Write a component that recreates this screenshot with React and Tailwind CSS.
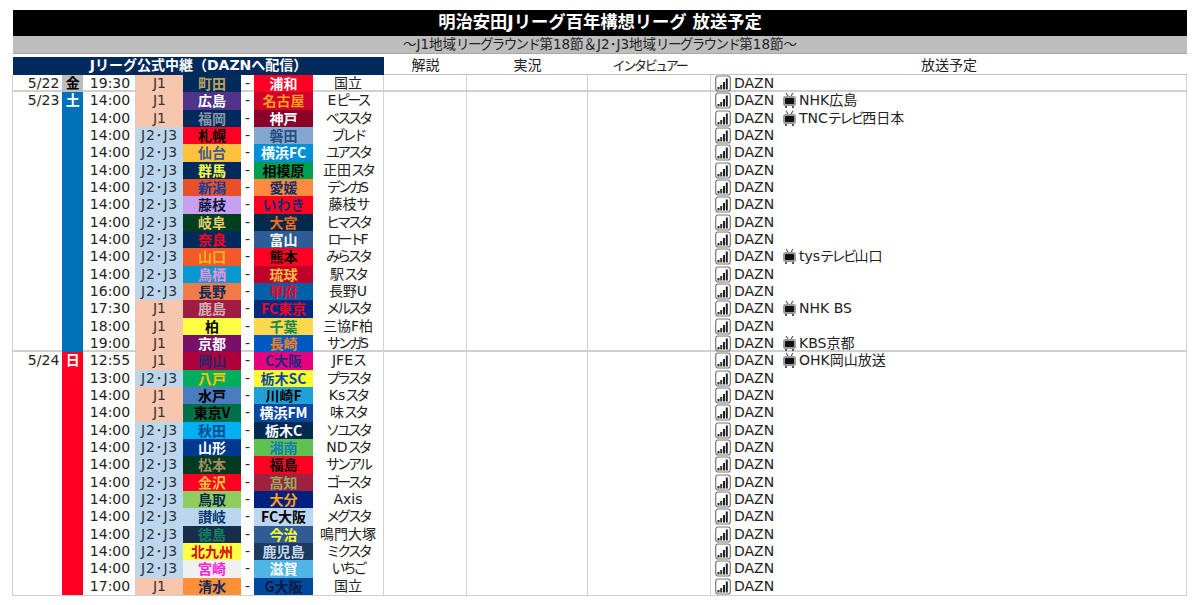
const font = { fontFamily: '"DejaVu Sans", "Noto Sans CJK JP", sans-serif' };

// [time, league, home, homeBg, homeFg, away, awayBg, awayFg, venue, extra]
const sat = [
  ["14:00", "J1", "広島", "bg-[#50348c]", "text-white", "名古屋", "bg-[#d0002a]", "text-[#ffa020]", "Eピース", "NHK広島"],
  ["14:00", "J1", "福岡", "bg-[#002a5c]", "text-[#8a98a8]", "神戸", "bg-[#8a0028]", "text-white", "ベススタ", "TNCテレビ西日本"],
  ["14:00", "J2", "札幌", "bg-[#ff0022]", "text-black", "磐田", "bg-[#82a8d2]", "text-[#2a4f80]", "ブレド"],
  ["14:00", "J2", "仙台", "bg-[#ffc23c]", "text-[#3f5b94]", "横浜FC", "bg-[#0090d8]", "text-white", "ユアスタ"],
  ["14:00", "J2", "群馬", "bg-[#002a5c]", "text-[#ffff44]", "相模原", "bg-[#00a050]", "text-black", "正田スタ"],
  ["14:00", "J2", "新潟", "bg-[#ea5028]", "text-[#0a3f9c]", "愛媛", "bg-[#ff8a40]", "text-[#0f2f66]", "デンカS"],
  ["14:00", "J2", "藤枝", "bg-[#c8a0f0]", "text-[#101840]", "いわき", "bg-[#ff0022]", "text-[#1a2a70]", "藤枝サ"],
  ["14:00", "J2", "岐阜", "bg-[#00401f]", "text-[#e8d070]", "大宮", "bg-[#002a4c]", "text-[#f06a20]", "ヒマスタ"],
  ["14:00", "J2", "奈良", "bg-[#002a5c]", "text-[#ff0022]", "富山", "bg-[#2f5c94]", "text-white", "ロートF"],
  ["14:00", "J2", "山口", "bg-[#f25a2a]", "text-[#ffb020]", "熊本", "bg-[#ff0022]", "text-black", "みらスタ", "tysテレビ山口"],
  ["14:00", "J2", "鳥栖", "bg-[#0898d0]", "text-[#f090d8]", "琉球", "bg-[#c0002a]", "text-[#ffc040]", "駅スタ"],
  ["16:00", "J2", "長野", "bg-[#f07a48]", "text-[#0a2a5c]", "甲府", "bg-[#0060a8]", "text-[#ff0022]", "長野U"],
  ["17:30", "J1", "鹿島", "bg-[#a01c44]", "text-[#d0b0b0]", "FC東京", "bg-[#002a80]", "text-[#ff0022]", "メルスタ", "NHK BS"],
  ["18:00", "J1", "柏", "bg-[#ffff44]", "text-black", "千葉", "bg-[#ffd84c]", "text-[#108a50]", "三協F柏"],
  ["19:00", "J1", "京都", "bg-[#781068]", "text-white", "長崎", "bg-[#0058c0]", "text-[#f08030]", "サンガS", "KBS京都"],
];

const sun = [
  ["12:55", "J1", "岡山", "bg-[#b0003c]", "text-[#1f2a70]", "C大阪", "bg-[#e8007c]", "text-[#1a2a80]", "JFEス", "OHK岡山放送"],
  ["13:00", "J2", "八戸", "bg-[#00ad5c]", "text-[#ffc000]", "栃木SC", "bg-[#ffff30]", "text-[#0a4aa0]", "プラスタ"],
  ["14:00", "J1", "水戸", "bg-[#4a7cc0]", "text-black", "川崎F", "bg-[#20a0d8]", "text-black", "Ksスタ"],
  ["14:00", "J1", "東京V", "bg-[#00704c]", "text-black", "横浜FM", "bg-[#0a48a0]", "text-white", "味スタ"],
  ["14:00", "J2", "秋田", "bg-[#00b0f0]", "text-[#0a4a90]", "栃木C", "bg-[#002a50]", "text-white", "ソユスタ"],
  ["14:00", "J2", "山形", "bg-[#003a90]", "text-white", "湘南", "bg-[#60c050]", "text-[#1080b0]", "NDスタ"],
  ["14:00", "J2", "松本", "bg-[#003a20]", "text-[#a09060]", "福島", "bg-[#ff0022]", "text-black", "サンアル"],
  ["14:00", "J2", "金沢", "bg-[#ff0022]", "text-[#ffc040]", "高知", "bg-[#a02040]", "text-[#90b060]", "ゴースタ"],
  ["14:00", "J2", "鳥取", "bg-[#90cc60]", "text-[#0a2a50]", "大分", "bg-[#002080]", "text-[#ffa020]", "Axis"],
  ["14:00", "J2", "讃岐", "bg-[#bcd6ee]", "text-[#0a3a70]", "FC大阪", "bg-[#bcd6ee]", "text-black", "メグスタ"],
  ["14:00", "J2", "徳島", "bg-[#162e4c]", "text-[#108060]", "今治", "bg-[#2f5c94]", "text-[#ffff30]", "鳴門大塚"],
  ["14:00", "J2", "北九州", "bg-[#ffff44]", "text-[#e00010]", "鹿児島", "bg-[#1a3a60]", "text-[#c8d8e8]", "ミクスタ"],
  ["14:00", "J2", "宮崎", "bg-[#f0f0f0]", "text-[#ff20e0]", "滋賀", "bg-[#50b4e4]", "text-white", "いちご"],
  ["17:00", "J1", "清水", "bg-[#ff9038]", "text-[#0a2a60]", "G大阪", "bg-[#00489c]", "text-[#0a1a40]", "国立"],
];

const fri = [["19:30", "J1", "町田", "bg-[#002b5c]", "text-[#b9a25e]", "浦和", "bg-[#ff0022]", "text-white", "国立"]];

// kana in the picture is set narrower than kanji, so squeeze only those runs
const Narrow = ({ text, cls }) =>
  text.split(/([\u3040-\u30ff]+)/).map((part, i) =>
    i % 2 ? <span key={i} className={cls}>{part}</span> : part
  );

const BarsIcon = () => (
  <svg width="16" height="17" viewBox="0 0 16 17" className="shrink-0">
    <rect x="0.7" y="1" width="14.6" height="15" rx="2.5" fill="white" stroke="#777" strokeWidth="1.2" />
    <rect x="2.5" y="12" width="2" height="2.5" fill="#222" />
    <rect x="5.2" y="10" width="2" height="4.5" fill="#333" />
    <rect x="8" y="7" width="2" height="7.5" fill="#222" />
    <rect x="10.8" y="3.5" width="2" height="11" fill="#222" />
  </svg>
);

const TvIcon = () => (
  <svg width="15" height="17" viewBox="0 0 15 17" className="shrink-0">
    <path d="M4 1 L6 4 M11 1 L9 4" stroke="#555" strokeWidth="1.2" fill="none" />
    <rect x="1" y="4" width="13" height="10" rx="2.5" fill="#9a9a9a" />
    <rect x="3" y="6" width="9" height="6" rx="1" fill="#111" />
    <rect x="3" y="14" width="2" height="2" fill="#555" />
    <rect x="10" y="14" width="2" height="2" fill="#555" />
  </svg>
);

const Row = ({ r }) => {
  const [time, league, home, homeBg, homeFg, away, awayBg, awayFg, venue, extra] = r;
  return (
    <div className="grid grid-cols-[52px_48px_58px_13px_59px_70px_83px_121px_123px_476px] h-[17.33px] leading-[17px] text-[14px] text-[#222]">
      <div className="text-center pl-[2px]">{time}</div>
      <div className={`relative text-center border-l border-[#d0d0d0] text-[#333] ${league === "J1" ? "bg-[#f8c6ac]" : "bg-[#bcd6ee] tracking-[0.8px]"}`}>
        {league === "J1" ? "J1" : "J2･J3"}
      </div>
      <div className={`relative text-center font-bold whitespace-nowrap font-['Noto_Sans_CJK_JP',sans-serif] ${homeBg} ${homeFg}`}>{home}</div>
      <div className="text-center">-</div>
      <div className={`relative text-center font-bold whitespace-nowrap font-['Noto_Sans_CJK_JP',sans-serif] ${awayBg} ${awayFg}`}>{away}</div>
      <div className="text-center whitespace-nowrap">
        <Narrow text={venue} cls="tracking-[-3px]" />
      </div>
      <div className="border-l border-[#d0d0d0]" />
      <div className="border-l border-[#d0d0d0]" />
      <div className="border-l border-[#d0d0d0]" />
      <div className="border-l border-[#d0d0d0] flex items-center pl-[4px]">
        <BarsIcon />
        <span className="ml-[3px] w-[48px]">DAZN</span>
        {extra && (
          <>
            <TvIcon />
            <span className="ml-[2px] whitespace-nowrap">
              <Narrow text={extra} cls="tracking-[-2.5px]" />
            </span>
          </>
        )}
      </div>
    </div>
  );
};

const Group = ({ date, day, dayBg, dayFg, rows }) => (
  <div className="flex border-[#d0d0d0] not-first:-mt-[2px] not-first:border-t-2">
    <div className="w-[50px] text-right pr-[3px] text-[14px] leading-[17px] text-[#222]">{date}</div>
    <div className={`relative w-[21px] text-center text-[14px] leading-[17px] font-bold ${dayBg} ${dayFg}`}>{day}</div>
    <div className="flex flex-col">
      {rows.map((r, i) => (
        <Row key={i} r={r} />
      ))}
    </div>
  </div>
);

export default function App() {
  return (
    <div className="w-[1200px] h-[605px] bg-white overflow-hidden pt-[10px] pl-[13px]" style={font}>
      <div className="w-[1174px]">
        <div className="h-[26px] bg-black text-white text-[17.3px] leading-[25px] font-bold text-center">
          明治安田Jリーグ百年構想リーグ 放送予定
        </div>
        <div className="h-[18px] bg-[#bdbdbd] text-[#222] text-[13.5px] leading-[17px] text-center border-b border-[#a8a8a8]">
          <Narrow text="～J1地域リーグラウンド第18節＆J2･J3地域リーグラウンド第18節～" cls="tracking-[-1.6px]" />
        </div>
        <div className="grid grid-cols-[371px_83px_121px_123px_476px] h-[18px] mt-[3px] text-[14px] leading-[17px] text-center text-[#222]">
          <div className="bg-[#002a5c] text-white font-bold">Jリーグ公式中継（DAZNへ配信）</div>
          <div className="border-b border-[#c0c0c0]">解説</div>
          <div className="border-b border-[#c0c0c0]">実況</div>
          <div className="border-b border-[#c0c0c0] text-[13px] tracking-[-2.3px]">インタビュアー</div>
          <div className="border-b border-[#c0c0c0]">放送予定</div>
        </div>
        <div className="border-x border-b border-[#d0d0d0] w-[1175px] -ml-[1px]">
          <Group date="5/22" day="金" dayBg="bg-[#bdbdbd]" dayFg="text-black" rows={fri} />
          <Group date="5/23" day="土" dayBg="bg-[#0070b8]" dayFg="text-white" rows={sat} />
          <Group date="5/24" day="日" dayBg="bg-[#ff0022]" dayFg="text-white" rows={sun} />
        </div>
      </div>
    </div>
  );
}
